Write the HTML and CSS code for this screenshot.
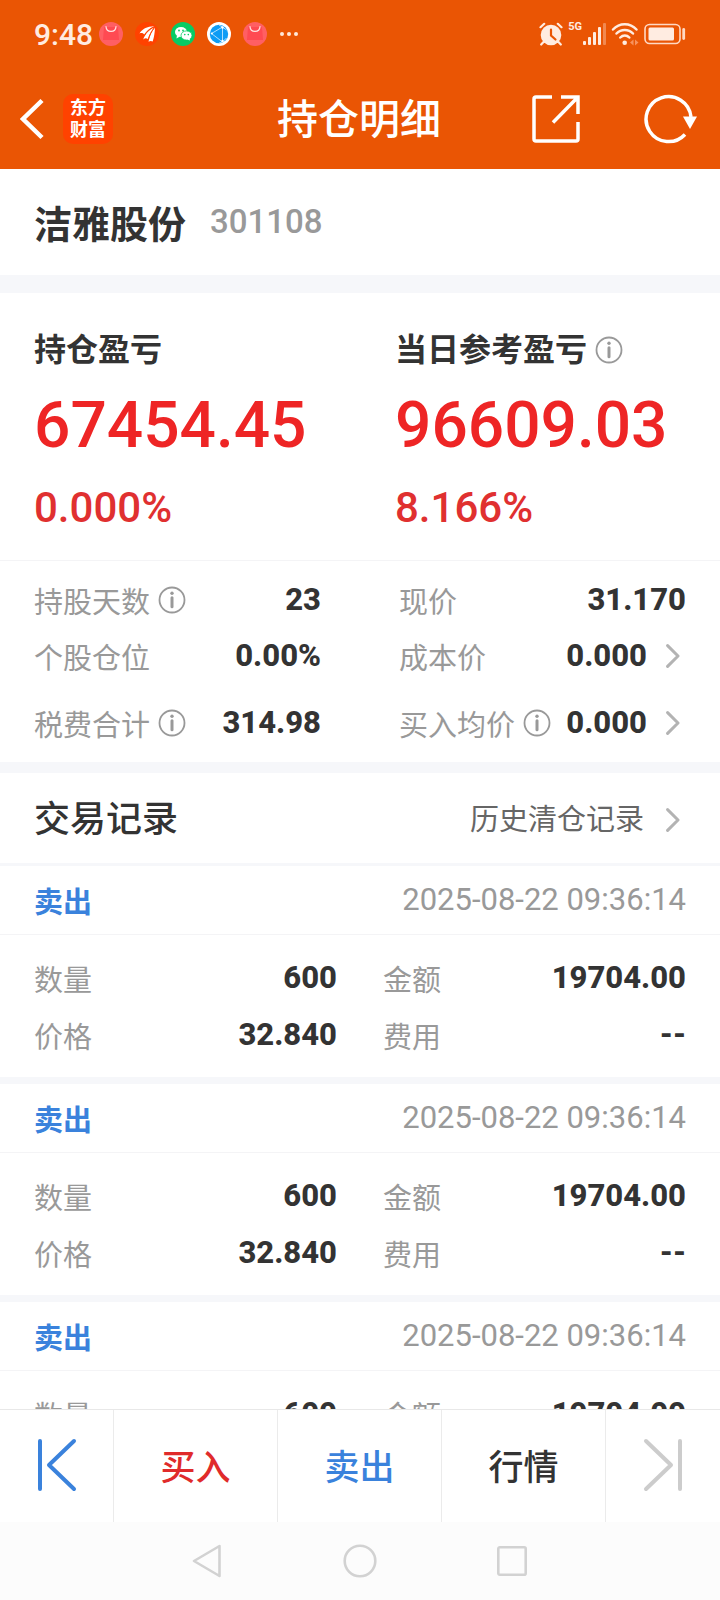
FILE: index.html
```html
<!DOCTYPE html>
<html lang="zh-CN">
<head>
<meta charset="utf-8">
<meta name="viewport" content="width=device-width, initial-scale=1">
<title>持仓明细</title>
<link rel="stylesheet" href="styles.css">
</head>
<body>
<svg class="defs" aria-hidden="true">
  <symbol id="info" viewBox="0 0 28 28">
    <circle cx="14" cy="14" r="12.5" fill="none" stroke="currentColor" stroke-width="1.8"/>
    <circle cx="14" cy="7.3" r="1.7" fill="currentColor"/>
    <path d="M14 11.8v9" fill="none" stroke="currentColor" stroke-width="3" stroke-linecap="round"/>
  </symbol>
  <symbol id="chevron" viewBox="0 0 14 24">
    <path d="M1.6 1.6 12 12 1.6 22.4" fill="none" stroke="currentColor" stroke-width="3" stroke-linecap="round" stroke-linejoin="round"/>
  </symbol>
  <symbol id="bag" viewBox="0 0 24 24">
    <circle cx="12" cy="12" r="12" fill="#ff5f63"/>
    <path d="M5 5h14l1 13H4z" fill="#ff4a52"/>
    <path d="M7 4.600c.4 6.400 9.600 6.400 10 0" fill="none" stroke="#ffe3e0" stroke-width="1.200" stroke-linecap="round"/>
  </symbol>
</svg>
<div class="app">
  <header class="top">
    <div class="status">
      <span class="clock">9:48</span>
      <div class="notices">
        <svg width="24" height="24"><use href="#bag"/></svg>
        <svg width="24" height="24" viewBox="0 0 24 24"><circle cx="12" cy="12" r="12" fill="#ff4200"/><g fill="#fff"><path d="M4.500 11.500C6.500 7.500 12 4.300 19.500 4.300 14.500 6 11.500 9 9.200 12.600 7.800 11 6.300 10.800 4.500 11.500z"/><path d="M8.300 17.500C9.500 12.500 13.500 7.500 19.600 5 16.500 8.500 14.500 12 12.800 17 11.300 16 9.900 16.200 8.300 17.500z"/><path d="M13.500 19.800C14.500 14 16.500 9 20 5.500c-.3 4.500-.6 9-2.300 14-1.300-.8-2.800-.7-4.200.3z"/></g><path d="M19.500 4.800C14.500 7 11 10.500 9 14.500M19.800 5.200C16.500 9 14.500 13.500 13.200 18" fill="none" stroke="#ff4200" stroke-width="1"/></svg>
        <svg width="24" height="24" viewBox="0 0 24 24"><circle cx="12" cy="12" r="12" fill="#08cb64"/><ellipse cx="10" cy="10" rx="6" ry="5" fill="#fff"/><path d="M5.500 16.500 6 13l3 1.500z" fill="#fff"/><ellipse cx="15.500" cy="13.500" rx="5.500" ry="4.600" fill="#fff" stroke="#08cb64" stroke-width=".8"/><path d="m18.800 18.600-2.600-1.200 2.600-1.400z" fill="#fff"/><circle cx="8" cy="8.500" r=".9" fill="#08cb64"/><circle cx="12" cy="8.500" r=".9" fill="#08cb64"/><circle cx="13.800" cy="12.600" r=".8" fill="#08cb64"/><circle cx="17.300" cy="12.600" r=".8" fill="#08cb64"/></svg>
        <svg width="24" height="24" viewBox="0 0 24 24"><circle cx="12" cy="12" r="12" fill="#fff"/><circle cx="12" cy="12" r="9.200" fill="#0d9cf5"/><path d="M4.500 11.500 15.500 5v15zM15.500 5l4 3M15.500 20l4-4M15.500 5 12 3M15.500 20 12 21" fill="none" stroke="#bfe6ff" stroke-width=".9"/><circle cx="4.800" cy="11.500" r="1.100" fill="#fff"/><circle cx="15.500" cy="5.500" r="1.200" fill="#fff"/><circle cx="15.500" cy="19" r="1.200" fill="#fff"/></svg>
        <svg width="24" height="24"><use href="#bag"/></svg>
        <svg width="20" height="24" viewBox="0 0 20 24"><g fill="#ffe9db"><circle cx="3" cy="12" r="2"/><circle cx="10" cy="12" r="2"/><circle cx="17" cy="12" r="2"/></g></svg>
      </div>
      <div class="signals">
        <svg width="24" height="24" viewBox="0 0 24 24"><circle cx="12" cy="13" r="10.300" fill="#ffece1"/><path d="M1.500 5.200 5.200 1.800M22.500 5.200 18.800 1.800M4.500 20 2.200 22.500M19.500 20l2.300 2.500" stroke="#ffece1" stroke-width="2.200" stroke-linecap="round"/><path d="M12 7.500v6l4.500 4" fill="none" stroke="#ea5504" stroke-width="2.200" stroke-linecap="round"/></svg>
        <div class="mobile">
          <span class="net">5G</span>
          <svg width="24" height="24" viewBox="0 0 24 24"><g fill="#ffece1"><rect x="1" y="19" width="3" height="4" rx="1"/><rect x="6" y="15" width="3" height="8" rx="1"/><rect x="11" y="10" width="3" height="13" rx="1"/><rect x="16" y="5" width="3" height="18" rx="1"/><rect x="21" y="1" width="3" height="22" rx="1" opacity=".35"/></g></svg>
        </div>
        <svg width="28" height="24" viewBox="0 0 28 24"><g fill="none" stroke="#ffece1" stroke-width="2.500" stroke-linecap="round"><path d="M2 7.500C8.500.500 19 .500 25.500 7.500"/><path d="M5.500 11.500c4.500-4.800 12-4.800 16.500 0"/><path d="M9.300 15.500c2.600-2.700 6.500-2.700 9 0"/></g><circle cx="13.700" cy="20.800" r="2.300" fill="#ffece1"/><path d="M22.500 17.500v6l-3.500-3zM24 17.500v6l3.500-3z" fill="#f7935f"/></svg>
        <svg width="42" height="24" viewBox="0 0 42 24"><rect x="1" y="2.500" width="35" height="19" rx="4.500" fill="none" stroke="#ffd9c4" stroke-width="1.600"/><rect x="4.500" y="5.500" width="25.500" height="13" rx="1.500" fill="#ffece1"/><path d="M39.700 7.500v9" stroke="#ffd9c4" stroke-width="2.800" stroke-linecap="round"/></svg>
      </div>
    </div>
    <div class="nav">
      <div class="side">
        <button class="icon-btn" aria-label="返回"><svg width="24" height="42" viewBox="0 0 24 42"><path d="M22 2.500 3 21l19 18.500" fill="none" stroke="#fff" stroke-width="4.500"/></svg></button>
        <div class="logo"><span>东方</span><span>财富</span></div>
      </div>
      <h1 class="title">持仓明细</h1>
      <div class="side side-end">
        <button class="icon-btn" aria-label="分享"><svg width="48" height="48" viewBox="0 0 48 48"><g fill="none" stroke="#fff" stroke-width="3.500"><path d="M20 2H4Q2 2 2 4v40q0 2 2 2h40q2 0 2-2V27"/><path d="M29 2h17v17M46 2 21 27.500"/></g></svg></button>
        <button class="icon-btn" aria-label="刷新"><svg width="54" height="50" viewBox="0 0 54 50"><path d="M41 40.500A22.500 22.500 0 1 1 47 23" fill="none" stroke="#fff" stroke-width="3.500"/><path d="M39 22.500h14L46 35z" fill="#fff"/></svg></button>
      </div>
    </div>
  </header>

  <main class="content">
    <section class="stock">
      <h2 class="stock-name">洁雅股份</h2>
      <span class="stock-code">301108</span>
    </section>

    <section class="summary">
      <div>
        <h3 class="sum-label">持仓盈亏</h3>
        <p class="sum-value">67454.45</p>
        <p class="sum-rate">0.000%</p>
      </div>
      <div>
        <h3 class="sum-label">当日参考盈亏<button class="icon-btn info" aria-label="当日参考盈亏说明"><svg width="28" height="28"><use href="#info"/></svg></button></h3>
        <p class="sum-value">96609.03</p>
        <p class="sum-rate">8.166%</p>
      </div>
    </section>

    <section class="details">
      <div class="pair"><span class="label">持股天数</span><button class="icon-btn info" aria-label="持股天数说明"><svg width="28" height="28"><use href="#info"/></svg></button><b class="value">23</b></div>
      <div class="pair"><span class="label">现价</span><b class="value">31.170</b></div>
      <div class="pair"><span class="label">个股仓位</span><b class="value">0.00%</b></div>
      <div class="pair"><span class="label">成本价</span><b class="value">0.000</b><button class="icon-btn more" aria-label="查看成本价"><svg width="14" height="24"><use href="#chevron"/></svg></button></div>
      <div class="pair last"><span class="label">税费合计</span><button class="icon-btn info" aria-label="税费合计说明"><svg width="28" height="28"><use href="#info"/></svg></button><b class="value">314.98</b></div>
      <div class="pair last"><span class="label">买入均价</span><button class="icon-btn info" aria-label="买入均价说明"><svg width="28" height="28"><use href="#info"/></svg></button><b class="value">0.000</b><button class="icon-btn more" aria-label="查看买入均价"><svg width="14" height="24"><use href="#chevron"/></svg></button></div>
    </section>

    <section class="records">
      <div class="records-head">
        <h2 class="records-title">交易记录</h2>
        <a class="history" href="#history">历史清仓记录<svg class="more" width="14" height="24"><use href="#chevron"/></svg></a>
      </div>
      <article class="record">
        <div class="record-head"><h3 class="side-sell">卖出</h3><time class="time" datetime="2025-08-22T09:36:14">2025-08-22 09:36:14</time></div>
        <div class="record-body">
          <div class="pair"><span class="label">数量</span><b class="value">600</b></div>
          <div class="pair"><span class="label">金额</span><b class="value">19704.00</b></div>
          <div class="pair"><span class="label">价格</span><b class="value">32.840</b></div>
          <div class="pair"><span class="label">费用</span><b class="value">--</b></div>
        </div>
      </article>
      <article class="record">
        <div class="record-head"><h3 class="side-sell">卖出</h3><time class="time" datetime="2025-08-22T09:36:14">2025-08-22 09:36:14</time></div>
        <div class="record-body">
          <div class="pair"><span class="label">数量</span><b class="value">600</b></div>
          <div class="pair"><span class="label">金额</span><b class="value">19704.00</b></div>
          <div class="pair"><span class="label">价格</span><b class="value">32.840</b></div>
          <div class="pair"><span class="label">费用</span><b class="value">--</b></div>
        </div>
      </article>
      <article class="record">
        <div class="record-head"><h3 class="side-sell">卖出</h3><time class="time" datetime="2025-08-22T09:36:14">2025-08-22 09:36:14</time></div>
        <div class="record-body">
          <div class="pair"><span class="label">数量</span><b class="value">600</b></div>
          <div class="pair"><span class="label">金额</span><b class="value">19704.00</b></div>
        </div>
      </article>
    </section>
  </main>

  <footer class="actions">
    <button class="action" aria-label="上一只"><svg width="40" height="54" viewBox="0 0 40 54"><path d="M3 3v48M37 3 12 27l25 24" fill="none" stroke="#3a82dc" stroke-width="4" stroke-linecap="round" stroke-linejoin="round"/></svg></button>
    <button class="action buy">买入</button>
    <button class="action sell">卖出</button>
    <button class="action">行情</button>
    <button class="action" aria-label="下一只"><svg width="40" height="54" viewBox="0 0 40 54"><path d="M37 3v48M3 3l25 24L3 51" fill="none" stroke="#ccc" stroke-width="4" stroke-linecap="round" stroke-linejoin="round"/></svg></button>
  </footer>

  <nav class="system" aria-label="系统导航">
    <button class="icon-btn" aria-label="后退"><svg width="34" height="34" viewBox="0 0 34 34"><path d="M28.500 2v30L3 17z" fill="none" stroke="#d2d2d2" stroke-width="2.600" stroke-linejoin="round"/></svg></button>
    <button class="icon-btn" aria-label="主屏幕"><svg width="34" height="34" viewBox="0 0 34 34"><circle cx="17" cy="17" r="15.300" fill="none" stroke="#d2d2d2" stroke-width="2.600"/></svg></button>
    <button class="icon-btn" aria-label="最近任务"><svg width="34" height="34" viewBox="0 0 34 34"><rect x="3.300" y="3.300" width="27.400" height="27.400" rx="1.500" fill="none" stroke="#d2d2d2" stroke-width="2.600"/></svg></button>
  </nav>
</div>
</body>
</html>
```
FILE: styles.css
```css
* {
  box-sizing: border-box;
}

body {
  margin: 0;
  background: #fff;
  color: #333;
  font-family: Roboto, "Noto Sans CJK SC", sans-serif;
  font-size: 29px;
}

h1, h2, h3, p {
  margin: 0;
  font-weight: 400;
}

svg {
  display: block;
  flex: none;
}

button {
  border: 0;
  padding: 0;
  background: none;
  color: inherit;
  font: inherit;
  cursor: pointer;
}

.defs {
  position: absolute;
  width: 0;
  height: 0;
}

.icon-btn {
  display: flex;
  flex: none;
}

.app {
  display: flex;
  flex-direction: column;
  height: 100vh;
}

/* Header */
.top {
  flex: none;
  background: #ea5504;
  color: #fff;
}

.status {
  display: flex;
  align-items: center;
  height: 68px;
  padding: 0 34px;
}

.clock {
  color: #ffece1;
  font-size: 30px;
  font-weight: 500;
}

.notices {
  display: flex;
  gap: 12px;
  margin-left: 6px;
}

.signals {
  display: flex;
  align-items: center;
  gap: 5px;
  margin-left: auto;
}

.mobile {
  display: flex;
}

.net {
  color: #ffece1;
  font-size: 11px;
  font-weight: 700;
  line-height: 9px;
}

.nav {
  display: grid;
  grid-template-columns: 1fr auto 1fr;
  align-items: center;
  height: 101px;
  padding: 0 22px 0 20px;
}

.side {
  display: flex;
  align-items: center;
  gap: 19px;
}

.side-end {
  justify-content: flex-end;
  gap: 64px;
}

.title {
  padding-top: 3px;
  font-size: 41px;
  font-weight: 500;
  line-height: 60px;
}

.logo {
  display: flex;
  flex-direction: column;
  align-items: center;
  justify-content: center;
  width: 50px;
  height: 50px;
  border-radius: 10px;
  background: #ff4200;
  font-size: 18px;
  font-weight: 700;
  line-height: 22px;
}

/* Scrolling content */
.content {
  flex: 1;
  min-height: 0;
  overflow: hidden;
}

.stock-name,
.side-sell,
.label {
  font-family: "Noto Sans CJK SC", sans-serif;
}

.stock {
  display: flex;
  align-items: center;
  gap: 24px;
  padding: 24px 34px;
  line-height: 58px;
  border-bottom: 18px solid #f6f7fa;
}

.stock-name {
  font-size: 38px;
  font-weight: 700;
}

.stock-code {
  color: #999;
  font-size: 33px;
  font-weight: 500;
}

.summary {
  display: grid;
  grid-template-columns: 1fr 1fr;
  column-gap: 70px;
  padding: 33px 34px 22px;
  border-bottom: 1px solid #f4f4f6;
}

.sum-label {
  display: flex;
  align-items: center;
  font-size: 32px;
  font-weight: 700;
  line-height: 48px;
}

.sum-value {
  color: #ee2525;
  font-size: 64px;
  font-weight: 500;
  line-height: 104px;
}

.sum-rate {
  color: #e03030;
  font-size: 42px;
  font-weight: 500;
  line-height: 60px;
}

.info {
  margin-left: 8px;
  color: #999;
}

.details {
  display: grid;
  grid-template-columns: 1fr 1fr;
  column-gap: 78px;
  padding: 11px 34px;
  border-bottom: 11px solid #f6f7fa;
}

.pair {
  display: flex;
  align-items: center;
  line-height: 56px;
}

.last {
  margin-top: 11px;
}

.label {
  color: #999;
}

.value {
  margin-left: auto;
  font-size: 31px;
  font-weight: 800;
}

.more {
  margin: 0 6px 0 19px;
  color: #b3b3b3;
}

/* Trade records */
.records-head {
  display: flex;
  align-items: center;
  justify-content: space-between;
  padding: 17px 34px 13px;
  line-height: 60px;
  border-bottom: 3px solid #f6f7fa;
}

.records-title {
  font-size: 36px;
  font-weight: 500;
}

.history {
  display: flex;
  align-items: center;
  color: #666;
  text-decoration: none;
}

.history .more {
  margin-left: 22px;
}

.record {
  border-bottom: 7px solid #f6f7fa;
}

.record-head {
  display: flex;
  align-items: center;
  justify-content: space-between;
  padding: 4px 34px;
  line-height: 60px;
  border-bottom: 1px solid #f4f4f6;
}

.side-sell {
  color: #3a82dc;
  font-size: 29px;
  font-weight: 700;
}

.time {
  color: #999;
  font-size: 31px;
}

.record-body {
  display: grid;
  grid-template-columns: 1fr 1fr;
  column-gap: 46px;
  row-gap: 1px;
  padding: 15px 34px 14px;
}

/* Bottom bars */
.actions {
  display: grid;
  grid-template-columns: 114px 1fr 1fr 1fr 114px;
  flex: none;
  height: 113px;
  border-top: 1px solid #e8e8e8;
}

.action {
  display: flex;
  align-items: center;
  justify-content: center;
  padding-bottom: 3px;
  border-right: 1px solid #ebebeb;
  font-size: 35px;
  font-weight: 500;
}

.action:last-child {
  border-right: 0;
}

.buy {
  color: #e02b2b;
}

.sell {
  color: #3a82dc;
}

.system {
  display: flex;
  align-items: center;
  justify-content: center;
  gap: 118px;
  flex: none;
  height: 78px;
  background: #fcfcfc;
}
```
